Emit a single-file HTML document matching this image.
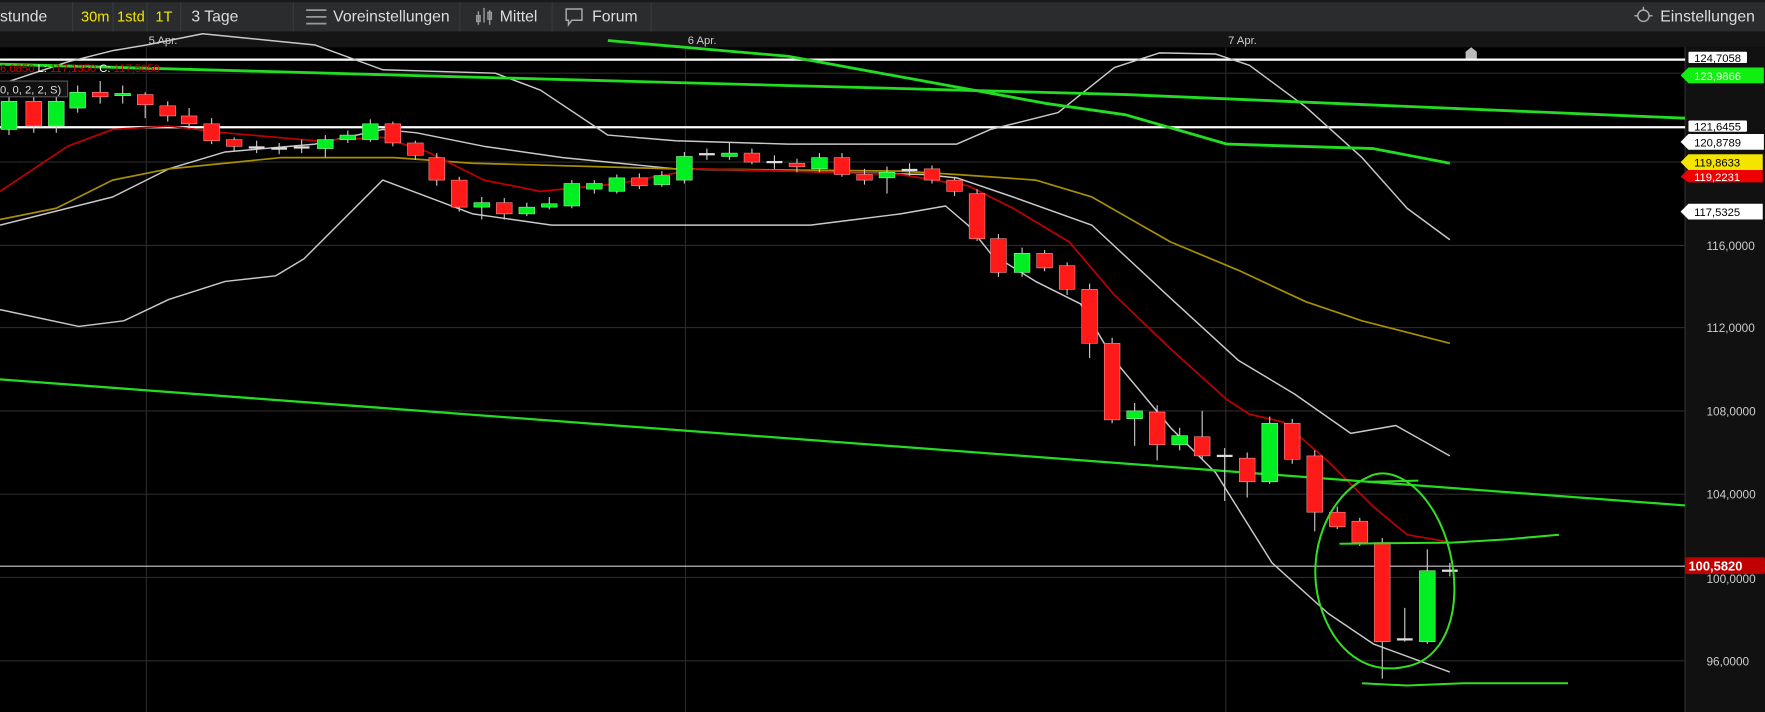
<!DOCTYPE html>
<html><head><meta charset="utf-8"><style>
html,body{margin:0;padding:0;background:#000;overflow:hidden;width:1765px;height:712px}
svg{display:block}
text{font-family:"Liberation Sans",Arial,sans-serif}
</style></head><body>
<svg width="1765" height="712" viewBox="0 0 1568 632.5" preserveAspectRatio="none" xmlns="http://www.w3.org/2000/svg">
<rect width="1568" height="633" fill="#000"/>
<!-- toolbar -->
<rect x="0" y="0" width="1568" height="28" fill="#2b2c2e"/>
<rect x="0" y="0" width="1568" height="2" fill="#1a1a1a"/>
<g fill="#3a3b3d"><rect x="64" y="2" width="1" height="26"/><rect x="100" y="2" width="1" height="26"/><rect x="130" y="2" width="1" height="26"/><rect x="160" y="2" width="1" height="26"/><rect x="260" y="2" width="1" height="26"/><rect x="408" y="2" width="1" height="26"/><rect x="490" y="2" width="1" height="26"/><rect x="578" y="2" width="1" height="26"/></g>
<text x="0" y="19" font-size="14" fill="#ddd">stunde</text>
<text x="72" y="19" font-size="13" fill="#f2e400">30m</text>
<text x="104" y="19" font-size="13" fill="#f2e400">1std</text>
<text x="138" y="19" font-size="13" fill="#f2e400">1T</text>
<text x="170" y="19" font-size="14" fill="#ddd">3 Tage</text>
<g stroke="#999" stroke-width="1.5"><line x1="272" y1="9" x2="290" y2="9"/><line x1="272" y1="15" x2="290" y2="15"/><line x1="272" y1="21" x2="290" y2="21"/></g>
<text x="296" y="19" font-size="14" fill="#ddd">Voreinstellungen</text>
<g stroke="#999" stroke-width="1.3" fill="none"><line x1="425" y1="10" x2="425" y2="22"/><line x1="430" y1="7" x2="430" y2="20"/><line x1="435" y1="9" x2="435" y2="22"/><rect x="423.5" y="14" width="3" height="5"/><rect x="433.5" y="11" width="3" height="6"/></g>
<text x="444" y="19" font-size="14" fill="#ddd">Mittel</text>
<path d="M503 8 h14 v10 h-9 l-3 4 v-4 h-2 z" stroke="#aaa" stroke-width="1.3" fill="none"/>
<text x="526" y="19" font-size="14" fill="#ddd">Forum</text>
<circle cx="1460" cy="14" r="5" stroke="#aaa" stroke-width="1.3" fill="none"/>
<g stroke="#aaa" stroke-width="1.3"><line x1="1452" y1="14" x2="1455" y2="14"/><line x1="1465" y1="14" x2="1468" y2="14"/><line x1="1460" y1="6" x2="1460" y2="9"/></g>
<text x="1475" y="19" font-size="14" fill="#ddd">Einstellungen</text>
<!-- date row -->
<rect x="0" y="28" width="1568" height="14" fill="#151515"/>
<text x="132" y="39" font-size="10" fill="#ccc">5 Apr.</text>
<text x="611" y="39" font-size="10" fill="#ccc">6 Apr.</text>
<text x="1091" y="39" font-size="10" fill="#ccc">7 Apr.</text>
<!-- axis bg -->
<rect x="1497" y="42" width="71" height="591" fill="#111"/>
<line x1="1497" y1="42" x2="1497" y2="633" stroke="#333"/>
<!-- grid -->
<g stroke="#2a2a2a" stroke-width="1">
<line x1="0" y1="218" x2="1497" y2="218"/><line x1="0" y1="291" x2="1497" y2="291"/><line x1="0" y1="365" x2="1497" y2="365"/><line x1="0" y1="439" x2="1497" y2="439"/><line x1="0" y1="513" x2="1497" y2="513"/><line x1="0" y1="587" x2="1497" y2="587"/><line x1="0" y1="65" x2="1497" y2="65"/><line x1="0" y1="144" x2="1497" y2="144"/>
<line x1="130" y1="42" x2="130" y2="633"/><line x1="609" y1="42" x2="609" y2="633"/><line x1="1089" y1="42" x2="1089" y2="633"/>
</g>
<!-- lines -->
<line x1="0" y1="53" x2="1497" y2="53" stroke="#fff" stroke-width="2"/>
<line x1="0" y1="113" x2="1497" y2="113" stroke="#fff" stroke-width="2"/>
<line x1="0" y1="503" x2="1497" y2="503" stroke="#ccc" stroke-width="1"/>
<path d="M1302 52 v-6 l5 -4 l5 4 v6 z" fill="#bbb"/>
<g fill="none" stroke-linejoin="round">
<polyline stroke="#c9c9c9" stroke-width="1.3" points="0,75 60,55 100,45 130,40 180,30 280,40 340,62 440,65 480,80 540,120 600,125 700,128 850,128 880,115 940,100 990,60 1030,47 1080,48 1110,58 1160,95 1210,140 1250,185 1288,213"/>
<polyline stroke="#c9c9c9" stroke-width="1.3" points="0,275 70,290 110,285 150,266 200,250 245,245 270,230 300,200 340,160 380,175 420,190 490,200 600,200 720,200 760,195 800,190 840,183 860,200 880,225 920,250 960,270 990,320 1040,380 1080,420 1130,500 1180,545 1220,572 1288,597"/>
<polyline stroke="#c9c9c9" stroke-width="1.3" points="0,200 100,175 150,150 200,135 280,128 340,115 370,118 430,130 500,140 600,150 700,152 820,155 850,158 900,175 970,200 1040,265 1100,320 1150,350 1200,385 1240,378 1288,405"/>
<polyline stroke="#a88f00" stroke-width="1.5" points="0,195 50,185 100,160 150,150 250,140 350,140 420,145 600,150 800,152 850,155 920,160 970,175 1040,215 1100,240 1160,268 1210,285 1288,305"/>
<polyline stroke="#c00000" stroke-width="1.5" points="0,170 60,130 100,115 150,112 200,118 280,125 340,122 380,135 430,160 480,170 550,163 620,150 700,152 800,155 860,165 900,185 950,215 990,262 1040,310 1090,355 1110,368 1140,375 1180,410 1220,450 1250,475 1290,482"/>
<polyline stroke="#22dd22" stroke-width="2.5" points="0,57 400,68 1000,84 1497,105"/>
<polyline stroke="#22dd22" stroke-width="2.5" points="540,36 700,50 930,92 1000,102 1090,128 1220,132 1288,145"/>
<line x1="0" y1="337" x2="1497" y2="449" stroke="#22dd22" stroke-width="2"/>
</g>
<!-- candles -->
<g id="c">
<g stroke="#ccc" stroke-width="1">
<line x1="8" y1="84" x2="8" y2="120"/><line x1="30" y1="84" x2="30" y2="118"/><line x1="50" y1="84" x2="50" y2="118"/><line x1="69" y1="76" x2="69" y2="100"/><line x1="89" y1="72" x2="89" y2="92"/><line x1="109" y1="76" x2="109" y2="92"/><line x1="129" y1="82" x2="129" y2="105"/><line x1="149" y1="90" x2="149" y2="108"/><line x1="168" y1="96" x2="168" y2="114"/><line x1="188" y1="105" x2="188" y2="128"/><line x1="208" y1="122" x2="208" y2="134"/><line x1="228" y1="125" x2="228" y2="136"/><line x1="248" y1="127" x2="248" y2="137"/><line x1="268" y1="124" x2="268" y2="136"/><line x1="289" y1="120" x2="289" y2="140"/><line x1="309" y1="116" x2="309" y2="127"/><line x1="329" y1="106" x2="329" y2="126"/><line x1="349" y1="108" x2="349" y2="130"/><line x1="369" y1="125" x2="369" y2="142"/><line x1="388" y1="136" x2="388" y2="165"/><line x1="408" y1="157" x2="408" y2="188"/><line x1="428" y1="175" x2="428" y2="195"/><line x1="448" y1="176" x2="448" y2="195"/><line x1="468" y1="180" x2="468" y2="192"/><line x1="488" y1="175" x2="488" y2="186"/><line x1="508" y1="160" x2="508" y2="185"/><line x1="528" y1="160" x2="528" y2="172"/><line x1="548" y1="155" x2="548" y2="172"/><line x1="568" y1="154" x2="568" y2="168"/><line x1="588" y1="152" x2="588" y2="166"/><line x1="608" y1="135" x2="608" y2="163"/><line x1="628" y1="132" x2="628" y2="142"/><line x1="648" y1="126" x2="648" y2="142"/><line x1="668" y1="132" x2="668" y2="146"/><line x1="688" y1="138" x2="688" y2="150"/><line x1="708" y1="141" x2="708" y2="153"/><line x1="728" y1="136" x2="728" y2="153"/><line x1="748" y1="136" x2="748" y2="157"/><line x1="768" y1="150" x2="768" y2="164"/><line x1="788" y1="148" x2="788" y2="172"/><line x1="808" y1="145" x2="808" y2="156"/><line x1="828" y1="147" x2="828" y2="163"/><line x1="848" y1="157" x2="848" y2="174"/><line x1="868" y1="168" x2="868" y2="214"/><line x1="887" y1="208" x2="887" y2="246"/><line x1="908" y1="220" x2="908" y2="246"/><line x1="928" y1="222" x2="928" y2="241"/><line x1="948" y1="233" x2="948" y2="262"/><line x1="968" y1="252" x2="968" y2="318"/><line x1="988" y1="300" x2="988" y2="376"/><line x1="1008" y1="358" x2="1008" y2="396"/><line x1="1028" y1="360" x2="1028" y2="409"/><line x1="1048" y1="380" x2="1048" y2="400"/><line x1="1068" y1="365" x2="1068" y2="408"/><line x1="1088" y1="398" x2="1088" y2="445"/><line x1="1108" y1="402" x2="1108" y2="442"/><line x1="1128" y1="370" x2="1128" y2="430"/><line x1="1148" y1="372" x2="1148" y2="412"/><line x1="1168" y1="400" x2="1168" y2="472"/><line x1="1188" y1="450" x2="1188" y2="470"/><line x1="1208" y1="460" x2="1208" y2="485"/><line x1="1228" y1="478" x2="1228" y2="603"/><line x1="1248" y1="540" x2="1248" y2="570"/><line x1="1268" y1="488" x2="1268" y2="572"/><line x1="1288" y1="500" x2="1288" y2="512"/>
</g>
<g fill="#00ee22" stroke="#9f9" stroke-width=".5">
<rect x="1" y="90" width="14" height="25"/><rect x="43" y="90" width="14" height="22"/><rect x="62" y="82" width="14" height="14"/><rect x="102" y="83" width="14" height="2"/><rect x="282" y="124" width="14" height="8"/><rect x="302" y="120" width="14" height="4"/><rect x="322" y="110" width="14" height="14"/><rect x="421" y="180" width="14" height="4"/><rect x="461" y="184" width="14" height="6"/><rect x="481" y="181" width="14" height="3"/><rect x="501" y="163" width="14" height="20"/><rect x="521" y="163" width="14" height="5"/><rect x="541" y="158" width="14" height="12"/><rect x="581" y="156" width="14" height="8"/><rect x="601" y="139" width="14" height="21"/><rect x="641" y="136" width="14" height="3"/><rect x="721" y="140" width="14" height="10"/><rect x="781" y="153" width="14" height="5"/><rect x="901" y="225" width="14" height="17"/><rect x="1001" y="365" width="14" height="7"/><rect x="1041" y="387" width="14" height="8"/><rect x="1121" y="376" width="14" height="52"/><rect x="1261" y="507" width="14" height="63"/>
</g>
<g fill="#ff1a1a" stroke="#f99" stroke-width=".5">
<rect x="23" y="90" width="14" height="22"/><rect x="82" y="82" width="14" height="4"/><rect x="122" y="84" width="14" height="9"/><rect x="142" y="94" width="14" height="9"/><rect x="161" y="103" width="14" height="7"/><rect x="181" y="110" width="14" height="15"/><rect x="201" y="124" width="14" height="6"/><rect x="342" y="110" width="14" height="17"/><rect x="362" y="127" width="14" height="11"/><rect x="381" y="140" width="14" height="20"/><rect x="401" y="160" width="14" height="24"/><rect x="441" y="180" width="14" height="10"/><rect x="561" y="158" width="14" height="7"/><rect x="661" y="136" width="14" height="8"/><rect x="701" y="145" width="14" height="3"/><rect x="741" y="140" width="14" height="15"/><rect x="761" y="155" width="14" height="5"/><rect x="821" y="150" width="14" height="10"/><rect x="841" y="160" width="14" height="10"/><rect x="861" y="172" width="14" height="40"/><rect x="880" y="212" width="14" height="30"/><rect x="921" y="225" width="14" height="13"/><rect x="941" y="236" width="14" height="21"/><rect x="961" y="257" width="14" height="48"/><rect x="981" y="305" width="14" height="68"/><rect x="1021" y="366" width="14" height="29"/><rect x="1061" y="388" width="14" height="17"/><rect x="1101" y="407" width="14" height="21"/><rect x="1141" y="376" width="14" height="32"/><rect x="1161" y="405" width="14" height="50"/><rect x="1181" y="455" width="14" height="13"/><rect x="1201" y="463" width="14" height="19"/><rect x="1221" y="482" width="14" height="88"/>
</g>
<g fill="#ddd"><rect x="221" y="130" width="14" height="2"/><rect x="241" y="131" width="14" height="2"/><rect x="261" y="130" width="14" height="2"/><rect x="621" y="136" width="14" height="2"/><rect x="681" y="143" width="14" height="2"/><rect x="801" y="150" width="14" height="2"/><rect x="1081" y="404" width="14" height="2"/><rect x="1241" y="567" width="14" height="2"/><rect x="1281" y="506" width="14" height="2"/></g>
</g>
<!-- hand drawings -->
<g fill="none" stroke="#33dd22" stroke-width="1.8">
<path d="M1215 424 C1180 440 1160 490 1172 535 C1185 580 1215 600 1250 592 C1285 585 1300 540 1288 490 C1276 440 1240 410 1215 424"/>
<path d="M1190 483 L1290 482 L1340 479 L1385 475"/>
<path d="M1210 607 L1250 609 L1300 607 L1393 607"/>
<path d="M1215 428 L1260 427"/>
</g>
<!-- top-left info -->
<text x="0" y="64" font-size="10" fill="#d00000">6,0850  <tspan fill="#fff">L:</tspan> 117,1350  <tspan fill="#fff">C:</tspan> 117,5050</text>
<rect x="-2" y="72" width="62" height="14" fill="#111" stroke="#555"/>
<text x="0" y="83" font-size="10" fill="#ddd">0, 0, 2, 2, S)</text>
<!-- axis labels -->
<g font-size="10.5" fill="#ccc">
<text x="1516" y="222">116,0000</text><text x="1516" y="295">112,0000</text><text x="1516" y="369">108,0000</text><text x="1516" y="443">104,0000</text><text x="1516" y="518">100,0000</text><text x="1516" y="591">96,0000</text>
</g>
<rect x="1500" y="46" width="52" height="10" fill="#fff" rx="1"/><text x="1505" y="55" font-size="10" fill="#000">124,7058</text>
<path d="M1493 67 l7 -7 h67 v14 h-67 z" fill="#11ee11"/><text x="1505" y="71" font-size="10" fill="#fff">123,9866</text>
<rect x="1500" y="107" width="52" height="10" fill="#fff" rx="1"/><text x="1505" y="116" font-size="10" fill="#000">121,6455</text>
<path d="M1493 126 l7 -7 h67 v14 h-67 z" fill="#fff"/><text x="1505" y="130" font-size="10" fill="#000">120,8789</text>
<path d="M1493 157 l7 -7 h66 v12 h-66 z" fill="#ee0000"/><text x="1505" y="161" font-size="10" fill="#fff">119,2231</text>
<path d="M1493 144 l7 -7 h66 v14 h-66 z" fill="#f4e400"/><text x="1505" y="148" font-size="10" fill="#000">119,8633</text>
<path d="M1493 188 l7 -7 h66 v14 h-66 z" fill="#fff"/><text x="1505" y="192" font-size="10" fill="#000">117,5325</text>
<rect x="1497" y="495" width="71" height="15" fill="#c00000" rx="2"/><text x="1500" y="507" font-size="11.5" font-weight="bold" fill="#fff">100,5820</text>
</svg>
</body></html>
